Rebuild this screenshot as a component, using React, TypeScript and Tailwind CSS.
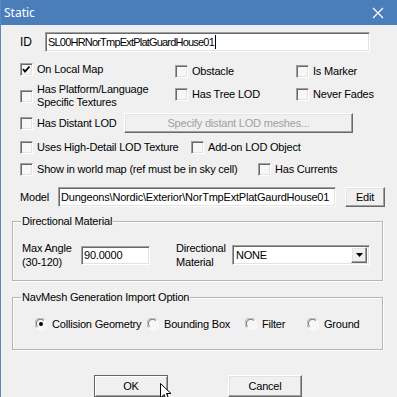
import React from "react";

const sunken =
  "border border-t-[#a0a0a0] border-l-[#a0a0a0] border-b-white border-r-white shadow-[inset_1px_1px_0_#696969,inset_-1px_-1px_0_#e3e3e3]";
const raised =
  "border border-t-white border-l-white border-b-[#696969] border-r-[#696969] shadow-[inset_-1px_-1px_0_#a0a0a0,inset_1px_1px_0_#e3e3e3] bg-[#f0f0f0]";

function Check({ checked = false }: { checked?: boolean }) {
  return (
    <div className={`w-[13px] h-[13px] shrink-0 bg-[#f7f7f7] ${sunken} relative`}>
      {checked && (
        <svg width="11" height="11" viewBox="0 0 11 11" className="absolute left-0 top-0">
          <polyline points="2,5 4,7.5 8.5,2.5" fill="none" stroke="#000" strokeWidth="1.8" />
        </svg>
      )}
    </div>
  );
}

function CB({ label, checked = false, w }: { label: React.ReactNode; checked?: boolean; w?: string }) {
  return (
    <div className={`flex items-center ${w ?? ""}`}>
      <Check checked={checked} />
      <span className="ml-[4px] leading-[13px] whitespace-nowrap">{label}</span>
    </div>
  );
}

function Radio({ label, checked = false, w }: { label: string; checked?: boolean; w?: string }) {
  return (
    <div className={`flex items-center ${w ?? ""}`}>
      <svg width="12" height="12" viewBox="0 0 12 12" className="shrink-0">
        <circle cx="6" cy="6" r="5.5" fill="#f7f7f7" />
        <path d="M1.5 9.5 A5.5 5.5 0 0 1 9.5 1.5" fill="none" stroke="#a0a0a0" strokeWidth="1" />
        <path d="M2.6 8.6 A4.2 4.2 0 0 1 8.6 2.6" fill="none" stroke="#696969" strokeWidth="1" />
        <path d="M10.5 2.5 A5.5 5.5 0 0 1 2.5 10.5" fill="none" stroke="#ffffff" strokeWidth="1" />
        {checked && <circle cx="6" cy="6" r="2" fill="#000" />}
      </svg>
      <span className="ml-[5px] whitespace-nowrap">{label}</span>
    </div>
  );
}

export default function App() {
  return (
    <div
      className="w-[397px] h-[397px] overflow-hidden bg-[#f0f0f0] border-l border-[#5b89be] text-[11px] tracking-[-0.2px] text-black relative"
      style={{ fontFamily: '"Liberation Sans", Arial, sans-serif' }}
    >
      {/* Title bar */}
      <div className="h-[25px] bg-[#4a7ebb] flex items-center justify-between">
        <span className="pl-[3px] text-white text-[12px] tracking-normal" style={{ fontFamily: '"Noto Sans", "Open Sans", sans-serif' }}>
          Static
        </span>
        <svg width="12" height="12" viewBox="0 0 12 12" className="mr-[13px]">
          <path d="M1 1 L11 11 M11 1 L1 11" stroke="#fff" strokeWidth="1.2" />
        </svg>
      </div>

      {/* ID row */}
      <div className="pl-[19px] mt-[7px] flex items-center">
        <span className="w-[25px] text-[12px]">ID</span>
        <div className={`w-[325px] h-[20px] bg-white ${sunken} flex items-center pl-[2px]`}>
          <span className="tracking-[-0.8px]">SL00HRNorTmpExtPlatGuardHouse01</span>
          <span className="w-px h-[14px] bg-black ml-[1px]" />
        </div>
      </div>

      {/* Row 1 */}
      <div className="pl-[19px] mt-[11px] flex items-start">
        <CB w="w-[155px]" label="On Local Map" checked />
        <CB w="w-[121px] mt-[2px]" label="Obstacle" />
        <CB w="mt-[2px]" label="Is Marker" />
      </div>

      {/* Row 2 */}
      <div className="pl-[19px] mt-[5px] flex items-start">
        <CB
          w="w-[155px]"
          label={
            <span className="block leading-[13px]">
              Has Platform/Language
              <br />
              Specific Textures
            </span>
          }
        />
        <CB w="w-[121px] mt-[5px]" label="Has Tree LOD" />
        <CB w="mt-[5px]" label="Never Fades" />
      </div>

      {/* Row 3 */}
      <div className="pl-[19px] mt-[4px] flex items-center">
        <CB w="w-[104px]" label="Has Distant LOD" />
        <div className={`w-[229px] h-[20px] ${raised} flex items-center justify-center text-[#a0a0a0]`}>
          Specify distant LOD meshes...
        </div>
      </div>

      {/* Row 4 */}
      <div className="pl-[19px] mt-[8px] flex items-center">
        <CB w="w-[171px]" label="Uses High-Detail LOD Texture" />
        <CB label="Add-on LOD Object" />
      </div>

      {/* Row 5 */}
      <div className="pl-[19px] mt-[9px] flex items-center">
        <CB w="w-[238px]" label="Show in world map (ref must be in sky cell)" />
        <CB label="Has Currents" />
      </div>

      {/* Model row */}
      <div className="pl-[19px] mt-[11px] flex items-center">
        <span className="w-[38px]">Model</span>
        <div className={`w-[278px] h-[20px] bg-white ${sunken} flex items-center pl-[2px] overflow-hidden whitespace-nowrap`}>
          Dungeons\Nordic\Exterior\NorTmpExtPlatGaurdHouse01
        </div>
        <div className={`ml-[9px] w-[40px] h-[20px] ${raised} flex items-center justify-center`}>Edit</div>
      </div>

      {/* Directional Material group */}
      <div className="relative mx-[11px] mt-[14px] w-[371px] border border-[#b4b4b4] shadow-[inset_1px_1px_0_#fff,1px_1px_0_#fff] pt-[19px] pb-[11px] pl-[9px]">
        <span className="absolute left-[8px] -top-[8px] bg-[#f0f0f0] px-[1px] leading-[14px]">Directional Material</span>
        <div className="flex items-center">
          <span className="w-[59px] leading-[14px]">
            Max Angle
            <br />
            (30-120)
          </span>
          <div className={`w-[69px] h-[19px] bg-white ${sunken} flex items-center pl-[2px]`}>90.0000</div>
          <span className="ml-[26px] w-[56px] leading-[14px]">
            Directional
            <br />
            Material
          </span>
          <div className={`w-[138px] h-[20px] bg-white ${sunken} flex items-center justify-between pl-[3px] pr-[2px]`}>
            <span>NONE</span>
            <div className={`w-[16px] h-[16px] ${raised} flex items-center justify-center`}>
              <svg width="7" height="4" viewBox="0 0 7 4">
                <path d="M0 0 H7 L3.5 4 Z" fill="#000" />
              </svg>
            </div>
          </div>
        </div>
      </div>

      {/* NavMesh group */}
      <div className="relative mx-[11px] mt-[16px] w-[371px] border border-[#b4b4b4] shadow-[inset_1px_1px_0_#fff,1px_1px_0_#fff] pt-[19px] pb-[18px] pl-[22px]">
        <span className="absolute left-[8px] -top-[8px] bg-[#f0f0f0] px-[1px] leading-[14px]">
          NavMesh Generation Import Option
        </span>
        <div className="flex items-center h-[14px]">
          <Radio w="w-[112px]" label="Collision Geometry" checked />
          <Radio w="w-[98px]" label="Bounding Box" />
          <Radio w="w-[62px]" label="Filter" />
          <Radio label="Ground" />
        </div>
      </div>

      {/* Buttons */}
      <div className="pl-[93px] mt-[25px] flex gap-[60px]">
        <div className="w-[74px] h-[22px] border border-[#646464] shadow-[inset_1px_1px_0_#fff,inset_-1px_-1px_0_#a0a0a0] bg-[#f0f0f0] flex items-center justify-center">
          OK
        </div>
        <div className={`w-[74px] h-[22px] ${raised} flex items-center justify-center`}>Cancel</div>
      </div>

      {/* Mouse cursor */}
      <svg width="14" height="20" viewBox="0 0 14 20" className="absolute left-[159px] top-[383px]">
        <path d="M0.5 0.5 L0.5 15 L4 11.5 L6.5 17.5 L9 16.5 L6.5 10.5 L11 10.5 Z" fill="#fff" stroke="#000" strokeWidth="1" />
      </svg>
    </div>
  );
}
